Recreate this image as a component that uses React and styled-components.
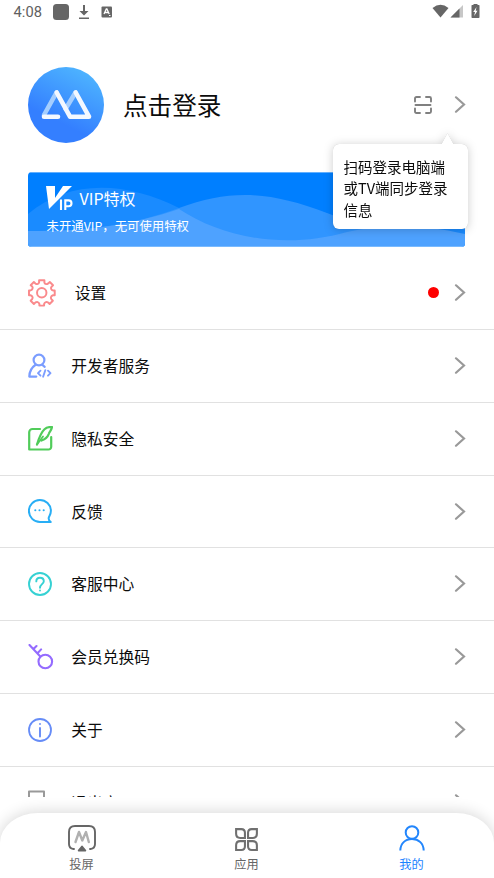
import React from 'react';
import styled, { createGlobalStyle } from 'styled-components';

const GlobalStyle = createGlobalStyle`
  * { box-sizing: border-box; }
  body {
    margin: 0;
    background: #fff;
    color: #0c0c0c;
    font-family: "Noto Sans CJK SC", sans-serif;
  }
  svg { display: block; flex: none; }
`;

const Screen = styled.div`
  position: relative;
  width: 494px;
  height: 878px;
  overflow: hidden;
  background: #fff;
`;

const StatusBar = styled.header`
  display: flex;
  align-items: center;
  height: 24px;
  padding: 0 14px 0 13px;
  color: #666;
  font-family: Roboto, sans-serif;
  font-size: 14.7px;
  font-weight: 400;
`;

const Clock = styled.span`
  width: 40px;
  padding-left: 0.5px;
  letter-spacing: 0.1px;
  color: #606060;
`;

const Spacer = styled.div`
  flex: 1;
`;

const Profile = styled.section`
  display: flex;
  align-items: center;
  height: 76px;
  margin-top: 43px;
  padding: 0 28.5px 0 28px;
`;

const LoginTitle = styled.h1`
  flex: 1;
  margin: 0 0 0 19px;
  font-size: 24.6px;
  font-weight: 400;
  line-height: 36px;
  transform: translateY(-1px);
`;

const ScanButton = styled.span`
  margin-right: 22px;
`;

const Banner = styled.section`
  position: relative;
  width: 437px;
  height: 75px;
  margin: 29px 0 0 28px;
  border-radius: 4px;
  overflow: hidden;
  background: #007fff;
`;

const Waves = styled.svg`
  position: absolute;
  inset: 0;
`;

const BannerContent = styled.div`
  position: relative;
  padding: 14px 0 0 18px;
  color: #fff;
`;

const BannerHead = styled.div`
  display: flex;
  align-items: center;
  gap: 6.5px;
  height: 25px;
  font-size: 16px;
  line-height: 25px;
`;

const BannerNote = styled.div`
  margin-top: 6px;
  padding-left: 0.5px;
  font-size: 12.4px;
  line-height: 18px;
`;

const Bubble = styled.div`
  position: absolute;
  top: 144px;
  left: 333px;
  width: 135px;
  height: 85px;
  padding: 11.5px 0 0 10.5px;
  border-radius: 6px;
  background: #fff;
  filter: drop-shadow(0 0 0.5px rgba(0, 0, 0, 0.25)) drop-shadow(0 1px 5px rgba(0, 0, 0, 0.2));
  font-size: 14.5px;
  line-height: 21.5px;
  white-space: nowrap;
`;

const BubbleTip = styled.svg`
  position: absolute;
  top: -11px;
  left: 108px;
`;

const Menu = styled.main`
  height: 549.5px;
  padding-top: 10px;
  overflow: hidden;
`;

const Row = styled.div`
  display: flex;
  align-items: center;
  height: 72.86px;
  padding: 0 28.5px 0 28px;
  border-bottom: 1px solid #e1e1e1;
`;

const RowIcon = styled.span`
  width: ${({ $wide }) => ($wide ? 46.7 : 43.3)}px;
`;

const RowLabel = styled.span`
  flex: 1;
  font-size: 15.75px;
  line-height: 24px;
`;

const Dot = styled.span`
  width: 11px;
  height: 11px;
  margin-right: 15px;
  border-radius: 50%;
  background: #fe0000;
`;

const TabBar = styled.nav`
  position: absolute;
  left: 0;
  right: 0;
  bottom: 0;
  display: grid;
  grid-template-columns: repeat(3, 165px);
  height: 65px;
  border-radius: 38px 38px 0 0 / 30px 30px 0 0;
  background: #fff;
  box-shadow: 0 -1px 15px rgba(0, 0, 0, 0.16);
`;

const Tab = styled.div`
  display: flex;
  flex-direction: column;
  align-items: center;
  padding: 10px 2px 0 0;
  color: ${({ $active }) => ($active ? '#1b82ff' : '#666')};
  font-size: 12.2px;
  line-height: 18px;
`;

const TabIcon = styled.span`
  display: grid;
  place-items: center;
  height: 31px;
  margin-bottom: 1px;
`;

const Chevron = () => (
  <svg width="12" height="18" viewBox="0 0 12 18" fill="none" stroke="#999" strokeWidth="2.200">
    <path d="M2 1.300 10 8.500l-8 7.200" strokeLinecap="round" />
  </svg>
);

const Avatar = () => (
  <svg width="76" height="76" viewBox="0 0 76 76" fill="none">
    <defs>
      <linearGradient id="avatar" x1="0.75" y1="0.02" x2="0.4" y2="0.72">
        <stop stopColor="#4eb5ff" />
        <stop offset="1" stopColor="#347fff" />
      </linearGradient>
    </defs>
    <circle cx="38" cy="38" r="38" fill="url(#avatar)" />
    <g strokeWidth="4.600" strokeLinecap="round" strokeLinejoin="round">
      <path d="M28.500 25.500 16 48M47.500 25.500 37.500 42" stroke="#a5ceff" />
      <path d="M30 49.700H16M28.700 25.500l13.300 24.200H61L47.700 25.500" stroke="#f4f8ff" />
    </g>
  </svg>
);

const line = { fill: 'none', strokeLinecap: 'round', strokeLinejoin: 'round' };

const GearIcon = () => (
  <svg width="27.500" height="27.500" viewBox="0 0 28 28" {...line} stroke="#fa8a8c" strokeWidth="2">
    <path d="M11.300 3.600V1.200h5.400v2.400q.5 1.300 1.900 1.600 1 0 2-.7l1.600-1.400 3.300 3.300-1.600 1.600q-.8 1.200-.3 2.200.5 1.300 2 1.500h1.600v4.800h-1.800q-1.600.4-2 1.800-.4 1 .4 2.200l1.500 1.600-3.300 3.300-1.700-1.600q-1.200-.7-2.200-.3-1.300.4-1.700 1.900v1.700h-4.800v-1.700q-.4-1.500-1.700-1.900-1-.4-2.200.3L6 25.400 2.700 22.100l1.500-1.600q.8-1.200.4-2.200-.4-1.400-2-1.800H1v-4.900h1.600q1.500-.3 2-1.800.5-1-.3-2.200L2.700 6.400 6 3.100l1.500 1.400q1 .8 2 .7 1.400-.3 1.800-1.600z" />
    <circle cx="14" cy="14" r="4.800" />
  </svg>
);

const DeveloperIcon = () => (
  <svg width="24" height="26" viewBox="0 0 24 26" {...line} stroke="#7b9dff" strokeWidth="2.200">
    <circle cx="11" cy="7" r="5.400" />
    <path d="M7.300 12C3.600 14.500 1.500 18 1.300 23.600h7M14.700 12.200l2 1.600" />
    <path d="m12.500 17.700-2.500 2.500 2.500 2.500M17.300 17.200l-2.200 6.500M20 17.700l2.500 2.500-2.500 2.500" strokeWidth="1.900" />
  </svg>
);

const PrivacyIcon = () => (
  <svg width="25" height="26" viewBox="0 0 25 26" {...line} stroke="#51cc5a" strokeWidth="2.200">
    <path d="M12 3H4.500a3.300 3.300 0 0 0-3.300 3.300V23.500h19.200a2.800 2.800 0 0 0 2.800-2.800V11" />
    <path d="M9 18.500C10.500 13.500 12.500 7 16.500 3.300c2-1.900 4.300-2.500 7.500-2.300-.5 3.300-2.500 4.500-3.200 6.800-1.200 3.500-4 5.500-7.300 6.700" />
    <path d="m9 18.500 6-8" strokeWidth="1.800" />
  </svg>
);

const FeedbackIcon = () => (
  <svg width="24" height="25" viewBox="0 0 24 25" {...line} stroke="#28aef5" strokeWidth="2">
    <path d="M22.700 23H12A11 11 0 1 1 22.900 11.800c0 3.200-1 4.600-1.900 6.200-.7 1.500.1 3.600 1.700 5z" />
    <path d="M7.300 11.200h.01M11.500 11.200h.01M15.700 11.200h.01" strokeWidth="2.100" />
  </svg>
);

const HelpIcon = () => (
  <svg width="24" height="24" viewBox="0 0 24 24" {...line} stroke="#36d1d3" strokeWidth="1.900">
    <circle cx="12" cy="12" r="11" />
    <path d="M8.300 9.400c0-2.300 1.500-3.700 3.700-3.700s3.800 1.400 3.800 3.500c0 2.800-3.800 3.100-3.800 6.500M12 18.500v.1" />
  </svg>
);

const KeyIcon = () => (
  <svg width="26" height="26" viewBox="0 0 26 26" {...line} stroke="#946bff" strokeWidth="2.100">
    <circle cx="17.300" cy="17.500" r="6.800" />
    <path d="M1.500 1 12.300 12.500M5.500 5l3-3M9.500 9.200l3.600-3.800" />
  </svg>
);

const AboutIcon = () => (
  <svg width="24" height="24" viewBox="0 0 24 24" {...line} stroke="#668cf7" strokeWidth="1.800">
    <circle cx="12" cy="12" r="11" />
    <path d="M12 10V18.500M12 5.900v.2" strokeWidth="1.900" />
  </svg>
);

const ExitIcon = () => (
  <svg width="24" height="26" viewBox="0 0 24 26" {...line} stroke="#999" strokeWidth="2">
    <path d="M16 8V1.500H1V24.500h15V20M9 13h13m-4-4 4 4-4 4" />
  </svg>
);

const ScanIcon = () => (
  <svg width="18" height="18" viewBox="0 0 18 18" {...line} stroke="#808080" strokeWidth="1.900">
    <path d="M1 5.500V2.500Q1 1 2.500 1h3.500M12 1h3.500Q17 1 17 2.500v3M17 12.500v3Q17 17 15.500 17h-3.500M6 17h-3.500Q1 17 1 15.500v-3M1.500 9h15" />
  </svg>
);

const VipIcon = () => (
  <svg width="27" height="25" viewBox="0 0 27 25" fill="none">
    <path d="M0 0h9v12L17 0h9L3 23z" fill="#fff" />
    <path d="M15 13.500v10.500M19.300 24V14.400h3.300a2.900 2.900 0 0 1 0 5.800h-3.300" stroke="#fff" strokeWidth="2.100" />
  </svg>
);

const CastIcon = () => (
  <svg width="30" height="29" viewBox="0 0 30 29" {...line} stroke="#666" strokeWidth="1.900">
    <path d="M7 25H6.500Q2 24.500 2 20V8Q2 2 8 2h14q6 0 6 6v12q0 4.500-4.500 5H23" />
    <path d="m8.500 18 3.500-10 3.300 8.500L19 8l2.800 10" stroke="#b0b0b0" strokeWidth="2.400" />
    <path d="m15 22.500 3.300 4h-6.600z" fill="#666" />
  </svg>
);

const AppsIcon = () => (
  <svg width="25" height="27" viewBox="0 -2 24 26" fill="none" stroke="#707070" strokeWidth="2">
    <path d="M2 2h5q3.500 0 3.500 3.500v5H6q-4 0-4-4zM22 2h-5q-3.500 0-3.500 3.500v5H18q4 0 4-4zM2 22h5q3.500 0 3.500-3.500v-5H6q-4 0-4 4zM22 22h-5q-3.500 0-3.500-3.500v-5H18q4 0 4 4z" />
  </svg>
);

const MineIcon = () => (
  <svg width="26" height="28" viewBox="0 1 26 28" fill="none" stroke="#2386fc" strokeWidth="2">
    <circle cx="13" cy="8.500" r="6.300" />
    <path d="M1.300 26.500C1.500 19.500 6.200 15 13 15s11.500 4.500 11.700 11.500" />
  </svg>
);

const rows = [
  { label: '设置', Icon: GearIcon, wide: true, dot: true },
  { label: '开发者服务', Icon: DeveloperIcon },
  { label: '隐私安全', Icon: PrivacyIcon },
  { label: '反馈', Icon: FeedbackIcon },
  { label: '客服中心', Icon: HelpIcon },
  { label: '会员兑换码', Icon: KeyIcon },
  { label: '关于', Icon: AboutIcon },
  { label: '退出户', Icon: ExitIcon },
];

const tabs = [
  { label: '投屏', Icon: CastIcon },
  { label: '应用', Icon: AppsIcon },
  { label: '我的', Icon: MineIcon, active: true },
];

export default function App() {
  return (
    <Screen>
      <GlobalStyle />
      <StatusBar>
        <Clock>4:08</Clock>
        <svg width="60" height="20" viewBox="0 0 60 20" fill="#666">
          <rect x="0" y="2" width="16" height="16" rx="3.500" />
          <path d="M30 3h2v6h3.500L31 13.500 26.500 9H30zM26 15.500h10V17H26z" />
          <rect x="48.500" y="4.500" width="10.500" height="11" rx="1" />
          <path d="m51 12 2.300-5h.6l2.300 5M52 10.500h3.200" stroke="#fff" strokeWidth="1.300" fill="none" />
          <path d="M56 13.500h1.500" stroke="#fff" />
        </svg>
        <Spacer />
        <svg width="48" height="20" viewBox="0 0 48 20" fill="#666">
          <path d="M0.500 6Q8.500-.5 16.500 6L8.500 15.500z" />
          <path d="M31 3v12.500H18.500z" fill="#c7c7c7" />
          <path d="M27.500 6.400V15.500h-9z" />
          <path d="M41.500 3V2h4v1h1.500q.5 0 .5.700V15.200q0 .8-.8.800h-6.400q-.8 0-.8-.8V3.700q0-.7.5-.7z" />
          <path d="m44.500 5-3.300 5H43l-.8 4 3.300-5.300h-1.800z" fill="#fff" />
        </svg>
      </StatusBar>
      <Profile>
        <Avatar />
        <LoginTitle>点击登录</LoginTitle>
        <ScanButton><ScanIcon /></ScanButton>
        <Chevron />
      </Profile>
      <Banner>
        <Waves width="437" height="75" viewBox="0 0 437 75">
          <path d="M0 42C40 8 96 8 151 36s118 42 168 16c50-28 80-23 118-7v29H0z" fill="#1a8bff" />
          <path d="M0 59C52 60 102 54 151 36c52-19 90-17 148 5s85 26 138 26v8H0z" fill="#3095ff" />
          <path d="M0 59C52 60 102 54 151 37c42 28 105 41 168 23 35-8 75-8 118 2v13H0z" fill="#4ea2ff" />
          <path d="M0 .5h437M0 74.500h437" stroke="#8cc4ff" strokeOpacity="0.700" />
        </Waves>
        <BannerContent>
          <BannerHead><VipIcon />VIP特权</BannerHead>
          <BannerNote>未开通VIP，无可使用特权</BannerNote>
        </BannerContent>
      </Banner>
      <Bubble>
        <BubbleTip width="13" height="12" viewBox="0 0 13 12" fill="#fff">
          <path d="M0 12 6.500 0 13 12z" />
        </BubbleTip>
        扫码登录电脑端<br />或TV端同步登录<br />信息
      </Bubble>
      <Menu>
        {rows.map(({ label, Icon, wide, dot }) => (
          <Row key={label}>
            <RowIcon $wide={wide}><Icon /></RowIcon>
            <RowLabel>{label}</RowLabel>
            {dot && <Dot />}
            <Chevron />
          </Row>
        ))}
      </Menu>
      <TabBar>
        {tabs.map(({ label, Icon, active }) => (
          <Tab key={label} $active={active}>
            <TabIcon><Icon /></TabIcon>
            {label}
          </Tab>
        ))}
      </TabBar>
    </Screen>
  );
}
